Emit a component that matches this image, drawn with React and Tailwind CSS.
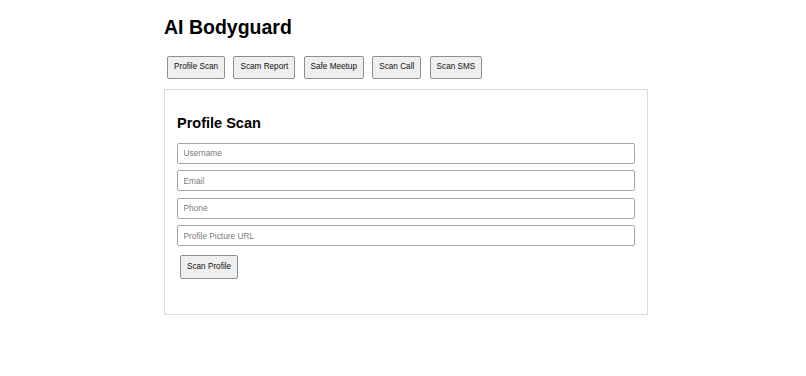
export default function App() {
  const tabs = ["Profile Scan", "Scam Report", "Safe Meetup", "Scan Call", "Scan SMS"];
  const fields = ["Username", "Email", "Phone", "Profile Picture URL"];

  return (
    <div className="min-h-screen bg-white pl-[6px] font-['Liberation_Sans',Arial,sans-serif] text-black">
      <div className="mx-auto w-[484px] pt-[16px]">
        <h1 className="text-[19.5px] font-bold leading-[22.4px]">AI Bodyguard</h1>

        <div className="mt-[17.6px] flex gap-[8.3px] pl-[3px]">
          {tabs.map((t) => (
            <button
              key={t}
              className="flex h-[23px] items-center rounded-[2px] border border-[#8f8f8f] bg-[#efefef] px-[6px] text-[8.2px] leading-none text-[#111]"
            >
              {t}
            </button>
          ))}
        </div>

        <div className="mt-[10px] h-[226px] border border-[#dcdcdc] px-[12px] pt-[12px]">
          <h2 className="mt-[13px] text-[14.5px] font-bold leading-[16.7px]">Profile Scan</h2>

          <form className="mt-[11px] flex flex-col gap-[6.5px]" onSubmit={(e) => e.preventDefault()}>
            {fields.map((f) => (
              <input
                key={f}
                placeholder={f}
                className="h-[21px] w-full rounded-[2px] border border-[#a6a6a6] px-[5.5px] text-[8.3px] outline-none placeholder:text-[#7a7a7a]"
              />
            ))}
            <div className="pl-[3px] pt-[2.5px]">
              <button className="flex h-[23.4px] items-center rounded-[2px] border border-[#8f8f8f] bg-[#efefef] px-[6px] text-[8.2px] leading-none text-[#111]">
                Scan Profile
              </button>
            </div>
          </form>
        </div>
      </div>
    </div>
  );
}
